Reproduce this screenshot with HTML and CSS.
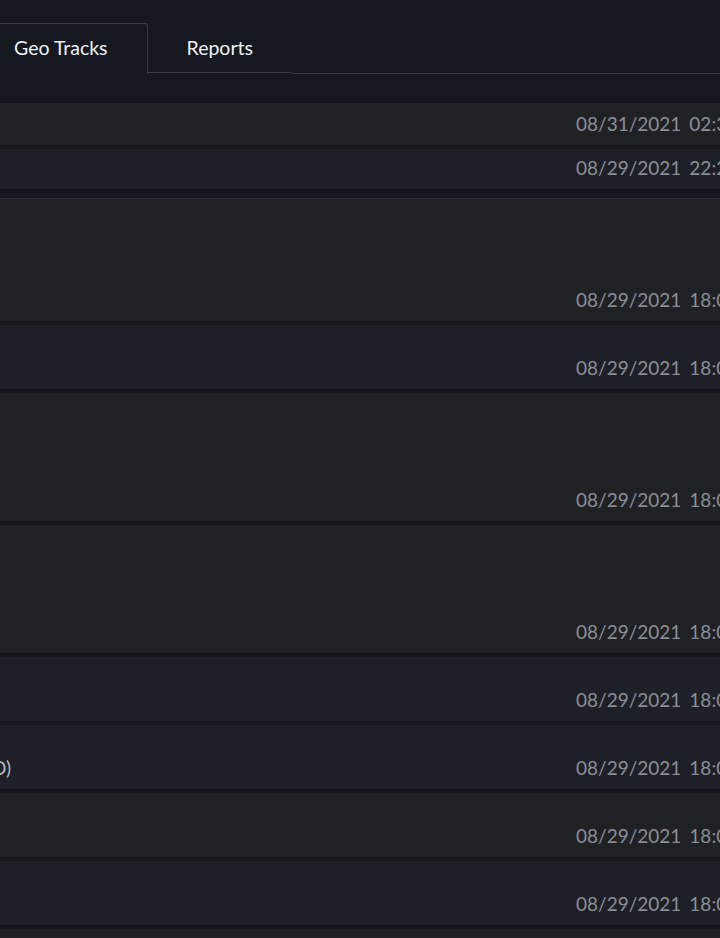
FILE: index.html
```html
<!DOCTYPE html>
<html lang="en">
<head>
<meta charset="utf-8">
<title>Geo Tracks</title>
<link rel="stylesheet" href="styles.css">
</head>
<body>
<div class="viewport">
  <div class="content">
    <div class="tabs">
      <div class="tab active">Geo Tracks</div>
      <div class="tab">Reports</div>
      <div class="tab-fill"></div>
    </div>

    <div class="list">
      <div class="row short gray"><div class="name"></div><div class="date"><span>08/31/2021</span><span>02:36</span></div></div>
      <div class="row short2 blue"><div class="name"></div><div class="date"><span>08/29/2021</span><span>22:21</span></div></div>
    </div>

    <div class="list divided">
      <div class="row tall3 gray"><div class="name"></div><div class="date"><span>08/29/2021</span><span>18:05</span></div></div>
      <div class="row blue"><div class="name"></div><div class="date"><span>08/29/2021</span><span>18:05</span></div></div>
      <div class="row tall gray"><div class="name"></div><div class="date"><span>08/29/2021</span><span>18:05</span></div></div>
      <div class="row tall gray"><div class="name"></div><div class="date"><span>08/29/2021</span><span>18:05</span></div></div>
      <div class="row blue"><div class="name"></div><div class="date"><span>08/29/2021</span><span>18:05</span></div></div>
      <div class="row blue"><div class="name"><span class="label">D)</span></div><div class="date"><span>08/29/2021</span><span>18:05</span></div></div>
      <div class="row gray"><div class="name"></div><div class="date"><span>08/29/2021</span><span>18:05</span></div></div>
      <div class="row blue"><div class="name"></div><div class="date"><span>08/29/2021</span><span>18:05</span></div></div>
      <div class="row gray"><div class="name"></div><div class="date"><span>08/29/2021</span><span>18:05</span></div></div>
    </div>
  </div>
</div>
</body>
</html>
```

FILE: styles.css
```css
html, body {
  margin: 0;
  padding: 0;
  background: #16181f;
}

body {
  font-family: Lato, "Open Sans", sans-serif;
  overflow: hidden;
}

.viewport {
  width: 720px;
  height: 938px;
  overflow: hidden;
}

.content {
  width: 1000px;
  margin-left: -26px;
}

.tabs {
  display: flex;
  padding-top: 23px;
}

.tab {
  height: 49px;
  line-height: 49px;
  padding: 0 39px;
  font-size: 19.5px;
  color: #eef0f3;
  border-bottom: 1px solid #3a3d46;
}

.tab.active {
  border: 1px solid #3a3d46;
  border-bottom: 1px solid transparent;
  border-radius: 3px 3px 0 0;
  height: 49px;
  line-height: 48px;
}

.tab-fill {
  flex: 1;
  border-bottom: 1px solid #3a3d46;
}

.list {
  display: flex;
  flex-direction: column;
  gap: 4px;
  margin-top: 29px;
}

.list.divided {
  margin-top: 9px;
  border-top: 1px solid #2a2d33;
}

.row {
  display: grid;
  grid-template-columns: 602px 1fr;
  height: 64px;
  box-shadow: 0 1px 2px rgba(10, 11, 16, 0.3);
}

.row.short { height: 42px; }
.row.short2 { height: 40px; }
.row.tall3 { height: 122px; }
.row.tall { height: 128px; }

.row.gray { background: #1f2125; }
.row.blue { background: #1e2028; }

.name {
  display: flex;
  align-items: flex-end;
  padding: 0 0 10px 18px;
  font-size: 19px;
  line-height: 22px;
  color: #b4b7bd;
}

.date {
  display: flex;
  align-items: flex-end;
  gap: 8px;
  padding-bottom: 10px;
  font-size: 19px;
  line-height: 22px;
  color: #8b8e95;
  white-space: nowrap;
}
```
